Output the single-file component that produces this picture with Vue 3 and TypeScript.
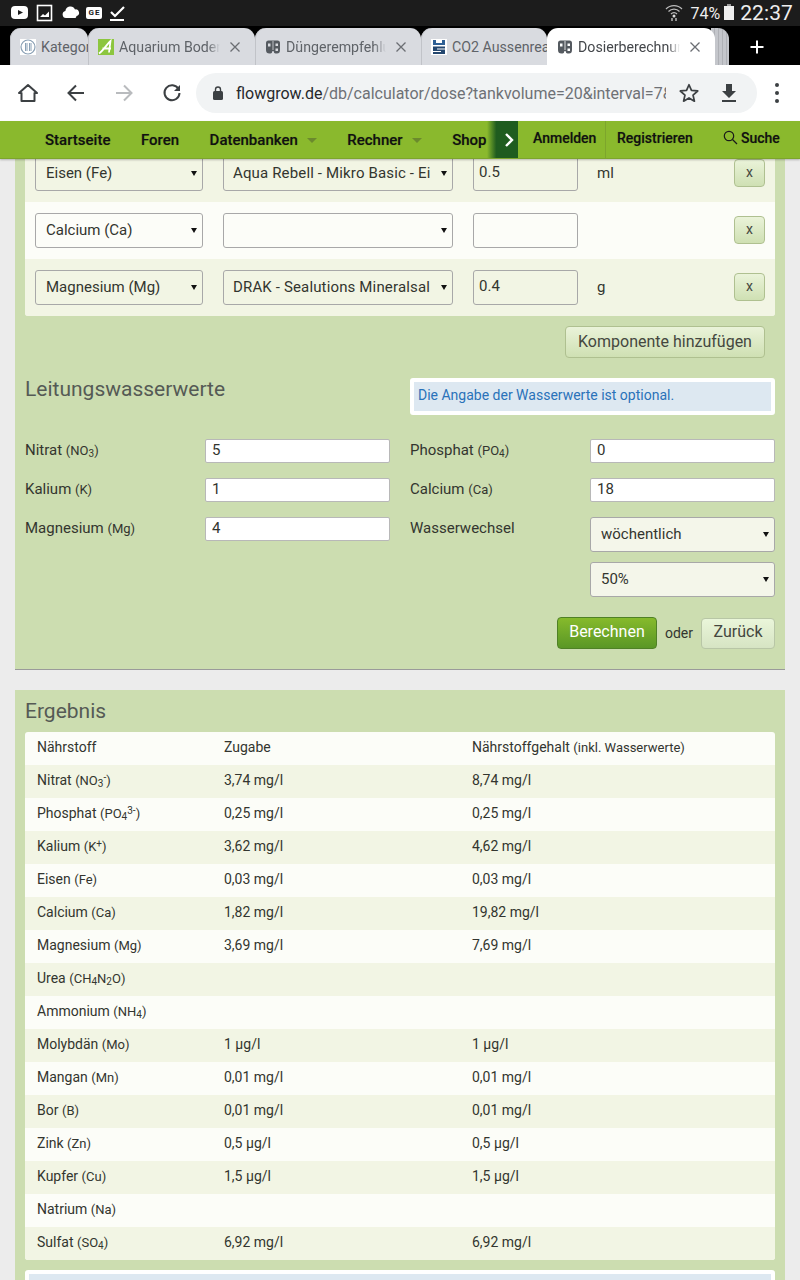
<template>
  <div class="page">
    <div class="statusbar">
      <div class="status-left">
        <svg width="20" height="20" viewBox="0 0 20 20"><rect x="1" y="3" width="17" height="13" rx="4" fill="#fff" /><path d="M8 7l5 2.500L8 12z" fill="#1c1c1c" /></svg>
        <svg width="18" height="20" viewBox="0 0 18 20"><rect x="1.500" y="2.500" width="14" height="15" fill="none" stroke="#fff" stroke-width="1.600" /><path d="M4 14l3-3 2 1.500 4-4v5.500z" fill="#fff" /></svg>
        <svg width="20" height="20" viewBox="0 0 20 20"><path d="M5 16a3.600 3.600 0 0 1-.6-7.100A5 5 0 0 1 14 7.500a3.300 3.300 0 0 1 1.500 6.500 3 3 0 0 1-1 2z" fill="#fff" transform="translate(1 -1)" /></svg>
        <span class="ge">G<i>E</i></span>
        <svg width="20" height="20" viewBox="0 0 20 20"><path d="M3 9l4 4 9-9" fill="none" stroke="#fff" stroke-width="2.200" /><rect x="2" y="16" width="14" height="2" fill="#fff" /></svg>
      </div>
      <div class="status-right">
        <svg width="18" height="20" viewBox="0 0 18 20" fill="none" stroke="#bbb" stroke-width="1.200"><path d="M1 6a11 11 0 0 1 16 0M3.500 8.500a7.500 7.500 0 0 1 11 0M6 11a4 4 0 0 1 6 0" /><circle cx="9" cy="13" r="1.500" fill="#ddd" stroke="none" /><path d="M7 18v-3M11 18v-3" stroke="#ddd" /></svg>
        <span class="battery-text">74%</span>
        <span class="battery" />
        <span class="clock">22:37</span>
      </div>
    </div>

    <div class="tabstrip">
      <div
        v-for="tab in tabs"
        :key="tab.title"
        :class="['tab', { 'tab--active': tab.active, 'tab--clipped': !tab.close }]"
        :style="{ width: tab.width + 'px' }"
      >
        <svg v-if="tab.icon === 'flow'" class="favicon" viewBox="0 0 16 16">
          <path d="M1 4q0-2.500 2.500-2.500h9Q15 1.500 15 4v7q0 3.500-3 3.500h-1.500q-1.500 0-2-2.500h-1q-.5 2.500-2 2.500h-1Q1 14.500 1 11z" fill="#555a60" />
          <path class="flow-cut" d="M3 4.500h2.500v3H3zM10.500 4.500h2.500v2.500h-2.500zM10.500 9.500h2.500v2.500h-2.500zM7.600 2v9h.8V2z" />
        </svg>
        <svg v-else-if="tab.icon === 'pi'" class="favicon" viewBox="0 0 16 16">
          <rect width="16" height="16" fill="#fff" />
          <circle cx="8" cy="8" r="7" fill="none" stroke="#8aa0b5" stroke-width="1.200" />
          <path d="M5.500 4v8M7 4v8M9.500 4v8M11 4v8" stroke="#8aa0b5" stroke-width="1" />
        </svg>
        <svg v-else-if="tab.icon === 'aq'" class="favicon" viewBox="0 0 16 16">
          <rect width="16" height="16" fill="#8cc63f" />
          <path d="M1 14.500C5 12 9 5 12.500 2L11 13.500M4.500 9.500h8.500" fill="none" stroke="#fff" stroke-width="1.800" />
        </svg>
        <svg v-else class="favicon" viewBox="0 0 16 16">
          <rect width="16" height="16" fill="#fff" />
          <path d="M2 1h3v3h6V1h3v5H2z" fill="#2e5f94" />
          <path d="M2 7.500h12v2H6v1h8V15H2v-2h8v-1H2z" fill="#24476f" />
        </svg>
        <span class="tab-title">{{ tab.title }}</span>
        <svg v-if="tab.close" class="tab-close" width="12" height="12" viewBox="0 0 12 12"><path d="M1.500 1.500l9 9M10.500 1.500l-9 9" stroke="#6b6e73" stroke-width="1.300" /></svg>
      </div>
      <div class="tab-stack" />
      <svg class="tab-plus" width="16" height="16" viewBox="0 0 16 16"><path d="M8 1.500v13M1.500 8h13" stroke="#fff" stroke-width="2" /></svg>
    </div>

    <div class="toolbar">
      <svg class="tool tool--home" width="24" height="24" viewBox="0 0 24 24"><path d="M12 4l9 8h-2.500v8h-13v-8H3z" fill="none" stroke="#3c4043" stroke-width="2" stroke-linejoin="round" /></svg>
      <svg class="tool tool--back" width="24" height="24" viewBox="0 0 24 24"><path d="M20 12H5M12 4.500L4.500 12l7.500 7.500" fill="none" stroke="#3c4043" stroke-width="2" /></svg>
      <svg class="tool tool--forward" width="24" height="24" viewBox="0 0 24 24"><path d="M4 12h15M12 4.500l7.500 7.500-7.500 7.500" fill="none" stroke="#b9bbbe" stroke-width="2" /></svg>
      <svg class="tool tool--reload" width="24" height="24" viewBox="0 0 24 24"><path d="M18.500 8A7.500 7.500 0 1 0 19.500 12" fill="none" stroke="#3c4043" stroke-width="2" /><path d="M20 4v6h-6z" fill="#3c4043" /></svg>
      <div class="omnibox">
        <svg width="14" height="16" viewBox="0 0 14 16"><rect x="2" y="6" width="10" height="9" rx="1.500" fill="#3c4043" /><path d="M4.500 6V4.500a2.500 2.500 0 0 1 5 0V6" fill="none" stroke="#3c4043" stroke-width="1.400" /></svg>
        <span class="url"><b>flowgrow.de</b>/db/calculator/dose?tankvolume=20&amp;interval=7&amp;x=1</span>
        <svg class="omni-star" width="22" height="22" viewBox="0 0 24 24"><path d="M12 3l2.700 6.200 6.800.6-5.100 4.500 1.500 6.600L12 17.400l-5.900 3.500 1.500-6.600L2.500 9.800l6.800-.6z" fill="none" stroke="#3c4043" stroke-width="1.900" stroke-linejoin="round" /></svg>
        <svg class="omni-down" width="22" height="22" viewBox="0 0 22 22"><path d="M8 3h6v7h4l-7 7-7-7h4z" fill="#3c4043" transform="translate(0 -1)" /><rect x="4" y="18" width="14" height="2" fill="#3c4043" /></svg>
      </div>
      <div class="dots"><i /><i /><i /></div>
    </div>

    <nav class="nav">
      <div class="nav-left">
        <a>Startseite</a>
        <a>Foren</a>
        <a class="has-caret">Datenbanken</a>
        <a class="has-caret">Rechner</a>
        <a class="nav-shop">Shop</a>
      </div>
      <div class="nav-scroll">
        <svg width="10" height="16" viewBox="0 0 10 16"><path d="M2 2l6 6-6 6" fill="none" stroke="#fff" stroke-width="2.400" /></svg>
      </div>
      <div class="nav-right">
        <a class="nav-login">Anmelden</a>
        <a class="nav-register">Registrieren</a>
        <a class="nav-search">
          <svg width="15" height="15" viewBox="0 0 15 15"><circle cx="6" cy="6" r="4.700" fill="none" stroke="#1a1a1a" stroke-width="1.200" /><path d="M9.500 9.500l4.500 4.500" stroke="#1a1a1a" stroke-width="1.300" /></svg>
          Suche
        </a>
      </div>
    </nav>

    <main class="main">
      <section class="panel panel--form">
        <div class="components">
          <div v-for="row in components" :key="row.nutrient" class="comp-row">
            <span class="select comp-nutrient"><select><option>{{ row.nutrient }}</option></select></span>
            <span class="select comp-product"><select><option>{{ row.product }}</option></select></span>
            <input class="comp-amount" :value="row.amount" />
            <span class="comp-unit">{{ row.unit }}</span>
            <button class="btn btn--x">x</button>
          </div>
        </div>
        <div class="add-row"><button class="btn btn--add">Komponente hinzufügen</button></div>

        <div class="water-head">
          <h2>Leitungswasserwerte</h2>
          <div class="notice">Die Angabe der Wasserwerte ist optional.</div>
        </div>

        <div class="water-grid">
          <div class="field"><label>Nitrat <small>(NO<sub>3</sub>)</small></label><input value="5" /></div>
          <div class="field"><label>Phosphat <small>(PO<sub>4</sub>)</small></label><input value="0" /></div>
          <div class="field"><label>Kalium <small>(K)</small></label><input value="1" /></div>
          <div class="field"><label>Calcium <small>(Ca)</small></label><input value="18" /></div>
          <div class="field"><label>Magnesium <small>(Mg)</small></label><input value="4" /></div>
          <div class="field field--change">
            <label>Wasserwechsel</label>
            <div class="change-selects">
              <span class="select"><select><option>wöchentlich</option></select></span>
              <span class="select"><select><option>50%</option></select></span>
            </div>
          </div>
        </div>

        <div class="actions">
          <button class="btn btn--primary">Berechnen</button>
          <span>oder</span>
          <button class="btn btn--back">Zurück</button>
        </div>
      </section>

      <section class="panel panel--result">
        <h2>Ergebnis</h2>
        <div class="result-wrap">
          <table class="result">
            <tbody>
              <tr>
                <td>Nährstoff</td>
                <td>Zugabe</td>
                <td>Nährstoffgehalt <small>(inkl. Wasserwerte)</small></td>
              </tr>
              <tr v-for="row in results" :key="row.id">
                <td>{{ row.name }} <small v-html="row.formula" /></td>
                <td>{{ row.dose }}</td>
                <td>{{ row.total }}</td>
              </tr>
            </tbody>
          </table>
        </div>
        <div class="notice notice--bottom" />
      </section>
    </main>
  </div>
</template>

<script setup lang="ts">
interface Tab {
  title: string;
  icon: string;
  width: number;
  close: boolean;
  active?: boolean;
}

const tabs: Tab[] = [
  { title: 'Kategorien', icon: 'pi', width: 78, close: false },
  { title: 'Aquarium Bodengrund', icon: 'aq', width: 167, close: true },
  { title: 'Düngerempfehlung', icon: 'flow', width: 166, close: true },
  { title: 'CO2 Aussenreaktor', icon: 'co2', width: 126, close: false },
  { title: 'Dosierberechnung', icon: 'flow', width: 168, close: true, active: true },
];

const components = [
  { nutrient: 'Eisen (Fe)', product: 'Aqua Rebell - Mikro Basic - Eisen', amount: '0.5', unit: 'ml' },
  { nutrient: 'Calcium (Ca)', product: '', amount: '', unit: '' },
  { nutrient: 'Magnesium (Mg)', product: 'DRAK - Sealutions Mineralsalz', amount: '0.4', unit: 'g' },
];

const results = [
  { id: 'no3', name: 'Nitrat', formula: '(NO<sub>3</sub><sup>-</sup>)', dose: '3,74 mg/l', total: '8,74 mg/l' },
  { id: 'po4', name: 'Phosphat', formula: '(PO<sub>4</sub><sup>3-</sup>)', dose: '0,25 mg/l', total: '0,25 mg/l' },
  { id: 'k', name: 'Kalium', formula: '(K<sup>+</sup>)', dose: '3,62 mg/l', total: '4,62 mg/l' },
  { id: 'fe', name: 'Eisen', formula: '(Fe)', dose: '0,03 mg/l', total: '0,03 mg/l' },
  { id: 'ca', name: 'Calcium', formula: '(Ca)', dose: '1,82 mg/l', total: '19,82 mg/l' },
  { id: 'mg', name: 'Magnesium', formula: '(Mg)', dose: '3,69 mg/l', total: '7,69 mg/l' },
  { id: 'urea', name: 'Urea', formula: '(CH<sub>4</sub>N<sub>2</sub>O)', dose: '', total: '' },
  { id: 'nh4', name: 'Ammonium', formula: '(NH<sub>4</sub>)', dose: '', total: '' },
  { id: 'mo', name: 'Molybdän', formula: '(Mo)', dose: '1 µg/l', total: '1 µg/l' },
  { id: 'mn', name: 'Mangan', formula: '(Mn)', dose: '0,01 mg/l', total: '0,01 mg/l' },
  { id: 'b', name: 'Bor', formula: '(B)', dose: '0,01 mg/l', total: '0,01 mg/l' },
  { id: 'zn', name: 'Zink', formula: '(Zn)', dose: '0,5 µg/l', total: '0,5 µg/l' },
  { id: 'cu', name: 'Kupfer', formula: '(Cu)', dose: '1,5 µg/l', total: '1,5 µg/l' },
  { id: 'na', name: 'Natrium', formula: '(Na)', dose: '', total: '' },
  { id: 'so4', name: 'Sulfat', formula: '(SO<sub>4</sub>)', dose: '6,92 mg/l', total: '6,92 mg/l' },
];
</script>

<style>
html,
body {
  margin: 0;
  height: 1280px;
  overflow: hidden;
  background: #ececec;
}

sub,
sup {
  font-size: 10px;
  line-height: 0;
}

sub {
  vertical-align: -2px;
}

sup {
  vertical-align: 4px;
}
</style>

<style scoped>
.page {
  width: 800px;
  height: 1280px;
  overflow: hidden;
  background: #ececec;
  font-family: Roboto, "Liberation Sans", sans-serif;
  color: #33352f;
}

.statusbar {
  height: 26px;
  background: #1c1c1c;
  display: flex;
  justify-content: space-between;
  align-items: center;
  padding: 0 7px 0 10px;
  color: #eee;
}

.status-left {
  display: flex;
  align-items: center;
  gap: 6px;
}

.ge {
  width: 16px;
  height: 12px;
  background: #fff;
  border-radius: 2px;
  color: #1c1c1c;
  font-size: 8px;
  font-weight: 700;
  line-height: 12px;
  text-align: center;
}

.ge i {
  font-style: normal;
  margin-left: 1px;
}

.status-right {
  display: flex;
  align-items: center;
}

.battery-text {
  font-size: 16px;
  margin-left: 8px;
}

.battery {
  width: 10px;
  height: 14px;
  margin: 0 6px 0 4px;
  background: #eee;
  position: relative;
}

.battery::before {
  content: '';
  position: absolute;
  top: -2px;
  left: 3px;
  width: 4px;
  height: 2px;
  background: #999;
}

.clock {
  font-size: 21px;
  letter-spacing: 0.1px;
}

.tabstrip {
  height: 39px;
  background: #000;
  display: flex;
  align-items: flex-end;
  padding-left: 10px;
  position: relative;
}

.tab {
  height: 37px;
  box-sizing: border-box;
  flex: none;
  background: #d9dbe0;
  border-radius: 11px 11px 0 0;
  display: flex;
  align-items: center;
  gap: 5px;
  padding: 0 0 0 10px;
  color: #5f6368;
  font-size: 14.200px;
  overflow: hidden;
  box-shadow: inset 1px 0 0 #c1c3c8;
}

.tab--active {
  background: #fff;
  box-shadow: none;
  color: #44474b;
  position: relative;
  z-index: 1;
}

.favicon {
  width: 16px;
  height: 16px;
  flex: none;
}

.flow-cut {
  fill: #d9dbe0;
}

.tab--active .flow-cut {
  fill: #fff;
}

.tab-title {
  flex: 1;
  min-width: 0;
  white-space: nowrap;
  overflow: hidden;
  -webkit-mask-image: linear-gradient(90deg, #000 88%, transparent);
  mask-image: linear-gradient(90deg, #000 88%, transparent);
}

.tab--clipped .tab-title {
  -webkit-mask-image: none;
  mask-image: none;
}

.tab-close {
  flex: none;
  margin: 0 14px 0 4px;
}

.tab-stack {
  width: 18px;
  height: 37px;
  background: repeating-linear-gradient(90deg, #c4c6cb 0 3px, #aeb0b5 3px 4px);
  border-radius: 0 11px 0 0;
  margin-left: -4px;
}

.tab-plus {
  margin: 0 0 10px 20px;
}

.toolbar {
  height: 56px;
  background: #fff;
  display: flex;
  align-items: center;
  position: relative;
}

.tool {
  flex: none;
}

.tool--home {
  margin-left: 16px;
}

.tool--back {
  margin-left: 24px;
}

.tool--forward {
  margin-left: 24px;
}

.tool--reload {
  margin-left: 24px;
}

.omnibox {
  margin-left: 12px;
  width: 561px;
  height: 40px;
  box-sizing: border-box;
  background: #f1f3f4;
  border-radius: 20px;
  display: flex;
  align-items: center;
  padding: 0 17px 0 15px;
  flex: none;
}

.url {
  margin-left: 11px;
  width: 430px;
  flex: none;
  overflow: hidden;
  white-space: nowrap;
  font-size: 16px;
  color: #6e7176;
}

.url b {
  font-weight: 400;
  color: #26282b;
}

.omni-star {
  margin-left: 12px;
  flex: none;
}

.omni-down {
  margin-left: 18px;
  flex: none;
}

.dots {
  display: flex;
  flex-direction: column;
  gap: 4px;
  margin-left: 18px;
}

.dots i {
  width: 4px;
  height: 4px;
  border-radius: 50%;
  background: #3c4043;
}

.nav {
  height: 38px;
  box-sizing: border-box;
  background: #8ab92d;
  border-bottom: 1px solid #7da52c;
  box-shadow: 0 1px 2px rgba(0, 0, 0, 0.25);
  display: flex;
  position: relative;
  z-index: 2;
  font-size: 14px;
  font-weight: 500;
  color: #111;
  text-shadow: 0 0 1px rgba(0, 0, 0, 0.35);
}

.nav-left {
  width: 487px;
  flex: none;
  overflow: hidden;
  display: flex;
  align-items: center;
  padding-left: 45px;
  box-sizing: border-box;
  gap: 30.500px;
  white-space: nowrap;
  font-size: 15px;
  padding-top: 1px;
}

.has-caret {
  display: flex;
  align-items: center;
}

.has-caret::after {
  content: '';
  margin-left: 9px;
  border: 5px solid transparent;
  border-top-color: #6b8a2d;
  border-bottom: 0;
}

.nav-scroll {
  width: 31px;
  flex: none;
  background: linear-gradient(90deg, #8ab92d, #1f5c1f 30%, #1f5c1f);
  display: flex;
  align-items: center;
  justify-content: flex-end;
  padding-right: 4px;
  box-sizing: border-box;
}

.nav-right {
  display: flex;
  align-items: center;
  flex: 1;
  padding-bottom: 4px;
}

.nav-login {
  padding: 0 15px;
  width: 88px;
  box-sizing: border-box;
  border-right: 1px solid #7da52c;
  height: 38px;
  line-height: 34px;
  margin-bottom: -4px;
  white-space: nowrap;
}

.nav-register {
  padding-left: 11px;
  width: 117px;
  box-sizing: border-box;
  white-space: nowrap;
}

.nav-search {
  display: flex;
  align-items: center;
  gap: 3px;
}

.main {
  padding: 0 15px;
}

.panel {
  background: #ccddb0;
  padding: 0 10px;
  display: flow-root;
}

.panel--form {
  border-bottom: 1px solid #9a9a9a;
  height: 511px;
  box-sizing: border-box;
}

.components {
  background: #f2f5e4;
  border-radius: 0 0 3px 3px;
  overflow: hidden;
  margin-top: -14px;
}

.comp-row {
  height: 57px;
  display: flex;
  align-items: center;
  padding: 0 10px;
  box-sizing: border-box;
  background: #f2f5e4;
}

.comp-row:nth-child(2) {
  background: #fcfdf8;
}

.select {
  display: block;
  position: relative;
  height: 35px;
  flex: none;
}

.select::after {
  content: '';
  position: absolute;
  right: 6px;
  top: 15px;
  border: 3px solid transparent;
  border-top: 5px solid #111;
  border-bottom: 0;
  pointer-events: none;
}

.select select {
  appearance: none;
  -webkit-appearance: none;
  width: 100%;
  height: 35px;
  box-sizing: border-box;
  border: 1px solid #a8a8a8;
  border-radius: 3px;
  background: transparent;
  font: 15px Roboto, sans-serif;
  color: #33352f;
  padding: 0 22px 2px 10px;
  margin: 0;
  display: block;
}

.comp-nutrient {
  width: 168px;
}

.comp-product {
  width: 230px;
  margin-left: 20px;
}

.comp-product select {
  letter-spacing: 0.15px;
  padding-left: 9px;
}

.comp-amount {
  width: 105px;
  height: 35px;
  box-sizing: border-box;
  margin-left: 20px;
  border: 1px solid #a8a8a8;
  border-radius: 3px;
  background: transparent;
  font: 15px Roboto, sans-serif;
  color: #33352f;
  padding: 0 5px 4px;
  flex: none;
}

.comp-unit {
  width: 156px;
  padding-left: 19px;
  box-sizing: border-box;
  font-size: 15px;
  flex: none;
  position: relative;
  top: -1px;
}

.btn {
  font-family: Roboto, sans-serif;
  border: 1px solid #afc090;
  border-radius: 4px;
  background: linear-gradient(#eaf3d9, #cfe0b3);
  color: #44473f;
  padding: 0 0 2px;
  margin: 0;
}

.btn--x {
  width: 31px;
  height: 28px;
  font-size: 14px;
  flex: none;
  margin-top: -1px;
}

.add-row {
  display: flex;
  justify-content: flex-end;
  padding: 10px 10px 0 0;
}

.btn--add {
  width: 200px;
  height: 32px;
  font-size: 16px;
}

.water-head {
  display: flex;
  justify-content: space-between;
  align-items: flex-start;
  margin-top: 20px;
}

h2 {
  margin: 0;
  font-size: 21px;
  font-weight: 400;
  color: #555a55;
  line-height: 22px;
}

.notice {
  width: 365px;
  height: 37px;
  box-sizing: border-box;
  background: #dde8f1;
  border: 4px solid #fff;
  border-radius: 3px;
  color: #2a72b9;
  font-size: 14px;
  line-height: 27px;
  padding-left: 4px;
}

.water-grid {
  display: grid;
  grid-template-columns: 365px 365px;
  column-gap: 20px;
  row-gap: 15px;
  margin-top: 24px;
}

.field {
  display: flex;
  align-items: flex-start;
  justify-content: space-between;
  font-size: 15px;
  height: 24px;
}

.field label {
  line-height: 23px;
}

small {
  font-size: 13px;
}

.field input {
  width: 185px;
  height: 24px;
  box-sizing: border-box;
  border: 1px solid #b8b8b8;
  border-radius: 2px;
  background: #fff;
  font: 15px Roboto, sans-serif;
  color: #33352f;
  padding: 0 6px 2px;
  flex: none;
}

.field--change {
  height: 95px;
}

.change-selects {
  width: 185px;
  display: flex;
  flex-direction: column;
  gap: 10px;
}

.change-selects select {
  background: #f4f6ea;
}

.actions {
  display: flex;
  justify-content: flex-end;
  align-items: center;
  gap: 8px;
  margin-top: 5px;
  font-size: 14px;
}

.btn--primary {
  width: 100px;
  height: 32px;
  font-size: 16px;
  padding-bottom: 4px;
  color: #fff;
  background: linear-gradient(#86ba2c, #5a9726);
  border-color: #4f8126;
}

.btn--back {
  width: 74px;
  height: 31px;
  font-size: 16px;
  padding-bottom: 4px;
  background: linear-gradient(#eaf6da, #d6e4c3);
  border-color: #b8c6a6;
}

.panel--result {
  margin-top: 20px;
  height: 600px;
}

.panel--result h2 {
  padding-top: 10px;
  padding-bottom: 10px;
}

.result-wrap {
  border-radius: 3px;
  overflow: hidden;
}

.result {
  width: 750px;
  border-collapse: collapse;
  table-layout: fixed;
  font-size: 14px;
  background: #fcfdf8;
}

.result tr {
  height: 33px;
}

.result tr:nth-child(even) {
  background: #f2f5e4;
}

.result td {
  padding: 0 0 3px 12px;
  white-space: nowrap;
  box-sizing: border-box;
}

.result td:nth-child(1) {
  width: 187px;
}

.result td:nth-child(2) {
  width: 248px;
}

.notice--bottom {
  width: 750px;
  margin-top: 10px;
}
</style>
